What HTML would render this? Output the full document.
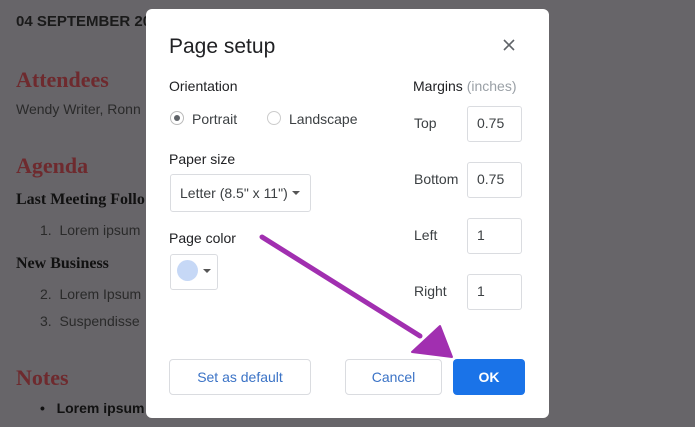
<!DOCTYPE html>
<html><head><style>
body{margin:0;width:695px;height:427px;background:#676569;position:relative;overflow:hidden;font-family:"Liberation Sans",sans-serif}
.a{position:absolute;white-space:nowrap}
.ser{font-family:"Liberation Serif",serif;font-weight:bold}
.dlg{position:absolute;left:146px;top:9px;width:403px;height:409px;background:#fff;border-radius:6px}
.box{position:absolute;border:1px solid #dadce0;border-radius:3px;background:#fff}
.lbl{color:#3c4043;font-size:14px}
</style></head><body>
<div class="a" style="left:16px;top:13px;font-size:15px;font-weight:bold;color:#1a1a1a">04 SEPTEMBER 20</div>
<div class="a ser" style="left:16px;top:67px;font-size:22px;color:#6e2a2e">Attendees</div>
<div class="a" style="left:16px;top:101px;font-size:14px;color:#2a2a2a">Wendy Writer, Ronn</div>
<div class="a ser" style="left:16px;top:153px;font-size:22px;color:#6e2a2e">Agenda</div>
<div class="a ser" style="left:16px;top:191px;font-size:16px;color:#111">Last Meeting Follo</div>
<div class="a" style="left:40px;top:222px;font-size:14px;color:#2a2a2a">1.&nbsp;&nbsp;Lorem ipsum</div>
<div class="a ser" style="left:16px;top:255px;font-size:16px;color:#111">New Business</div>
<div class="a" style="left:40px;top:286px;font-size:14px;color:#2a2a2a">2.&nbsp;&nbsp;Lorem Ipsum</div>
<div class="a" style="left:40px;top:313px;font-size:14px;color:#2a2a2a">3.&nbsp;&nbsp;Suspendisse</div>
<div class="a ser" style="left:16px;top:365px;font-size:22px;color:#6e2a2e">Notes</div>
<div class="a" style="left:40px;top:400px;font-size:14px;font-weight:bold;color:#111">•&nbsp;&nbsp;&nbsp;Lorem ipsum</div>
<div class="dlg">
 <div class="a" style="left:23px;top:26px;font-size:21px;color:#202124">Page setup</div>
 <svg class="a" style="left:357px;top:30px" width="12" height="12"><path d="M1 1L11 11M11 1L1 11" stroke="#5f6368" stroke-width="1.6"/></svg>
 <div class="a lbl" style="left:23px;top:69px;color:#202124">Orientation</div>
 <div class="a" style="left:24px;top:102px;width:12px;height:12px;border:1px solid #bbb;border-radius:50%"></div>
 <div class="a" style="left:28px;top:106px;width:6px;height:6px;background:#5f6368;border-radius:50%"></div>
 <div class="a lbl" style="left:46px;top:102px">Portrait</div>
 <div class="a" style="left:121px;top:102px;width:12px;height:12px;border:1px solid #ccc;border-radius:50%"></div>
 <div class="a lbl" style="left:143px;top:102px">Landscape</div>
 <div class="a lbl" style="left:23px;top:142px;color:#202124">Paper size</div>
 <div class="box" style="left:24px;top:165px;width:139px;height:36px"></div>
 <div class="a lbl" style="left:34px;top:176px">Letter (8.5" x 11")</div>
 <div class="a" style="left:146px;top:182px;border:4px solid transparent;border-top:4px solid #555;border-bottom:0"></div>
 <div class="a lbl" style="left:23px;top:221px;color:#202124">Page color</div>
 <div class="box" style="left:24px;top:245px;width:46px;height:34px"></div>
 <div class="a" style="left:31px;top:251px;width:21px;height:21px;background:#c6d8f6;border-radius:50%"></div>
 <div class="a" style="left:57px;top:260px;border:4px solid transparent;border-top:4px solid #555;border-bottom:0"></div>
 <div class="a lbl" style="left:267px;top:69px;color:#202124">Margins <span style="color:#9aa0a6">(inches)</span></div>
 <div class="a lbl" style="left:268px;top:106px">Top</div>
 <div class="box" style="left:321px;top:97px;width:53px;height:34px"></div>
 <div class="a lbl" style="left:331px;top:106px">0.75</div>
 <div class="a lbl" style="left:268px;top:162px">Bottom</div>
 <div class="box" style="left:321px;top:153px;width:53px;height:34px"></div>
 <div class="a lbl" style="left:331px;top:162px">0.75</div>
 <div class="a lbl" style="left:268px;top:218px">Left</div>
 <div class="box" style="left:321px;top:209px;width:53px;height:34px"></div>
 <div class="a lbl" style="left:331px;top:218px">1</div>
 <div class="a lbl" style="left:268px;top:274px">Right</div>
 <div class="box" style="left:321px;top:265px;width:53px;height:34px"></div>
 <div class="a lbl" style="left:331px;top:274px">1</div>
 <div class="box" style="left:23px;top:350px;width:140px;height:34px;border-radius:4px"></div>
 <div class="a" style="left:23px;top:360px;width:142px;text-align:center;font-size:14px;color:#3b73c6">Set as default</div>
 <div class="box" style="left:199px;top:350px;width:95px;height:34px;border-radius:4px"></div>
 <div class="a" style="left:199px;top:360px;width:97px;text-align:center;font-size:14px;color:#3b73c6">Cancel</div>
 <div class="a" style="left:307px;top:350px;width:72px;height:36px;background:#1a73e8;border-radius:4px"></div>
 <div class="a" style="left:307px;top:360px;width:72px;text-align:center;font-size:14px;font-weight:bold;color:#fff">OK</div>
</div>
<svg class="a" style="left:0;top:0" width="695" height="427">
 <path d="M262 237L420 336" stroke="#a12fb0" stroke-width="5" stroke-linecap="round"/>
 <path d="M452 357L412 352L440 326Z" fill="#a12fb0" stroke="#a12fb0" stroke-width="2" stroke-linejoin="round"/>
</svg>
</body></html>
